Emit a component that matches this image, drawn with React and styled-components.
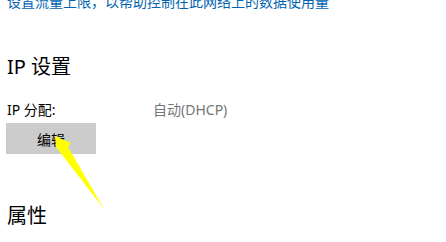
import React from 'react'
import styled, { createGlobalStyle } from 'styled-components'

const Global = createGlobalStyle`
  html, body {
    margin:0;
    padding:0;
    background:#fff;
    overflow:hidden;
  }
`

const Page = styled.div`
  position:relative;
  width:446px;
  height:242px;
  padding-left:7px;
  box-sizing:border-box;
  font-family:"Noto Sans","Noto Sans CJK SC",sans-serif;
  color:#000;
  overflow:hidden;
`

const Link = styled.div`
  margin-top:-5px;
  font-size:14px;
  line-height:14px;
  color:#0063b1;
  white-space:nowrap;
`

const Heading = styled.div`
  margin-top:${p => p.$top}px;
  font-size:20px;
  line-height:28px;
`

const Row = styled.div`
  display:grid;
  grid-template-columns:146px auto;
  margin-top:19px;
  font-size:14px;
  line-height:20px;
`

const Value = styled.span`
  color:#767676;
`

const Button = styled.button`
  display:block;
  margin:3px 0 0 -1px;
  width:90px;
  height:31px;
  border:none;
  background:#cccccc;
  font-family:inherit;
  font-size:14px;
  color:#000;
  padding:0;
`

const Arrow = styled.svg`
  position:absolute;
  left:0;
  top:0;
  pointer-events:none;
`

export default function App() {
  return (
    <>
      <Global />
      <Page>
        <Link>设置流量上限，以帮助控制在此网络上的数据使用量</Link>
        <Heading $top={44}>IP 设置</Heading>
        <Row>
          <span>IP 分配:</span>
          <Value>自动(DHCP)</Value>
        </Row>
        <Button>编辑</Button>
        <Heading $top={48}>属性</Heading>
        <Arrow width="446" height="242">
          <polygon points="55,136 71,143 68,147 104,209 56,147" fill="#ffff00" />
        </Arrow>
      </Page>
    </>
  )
}
